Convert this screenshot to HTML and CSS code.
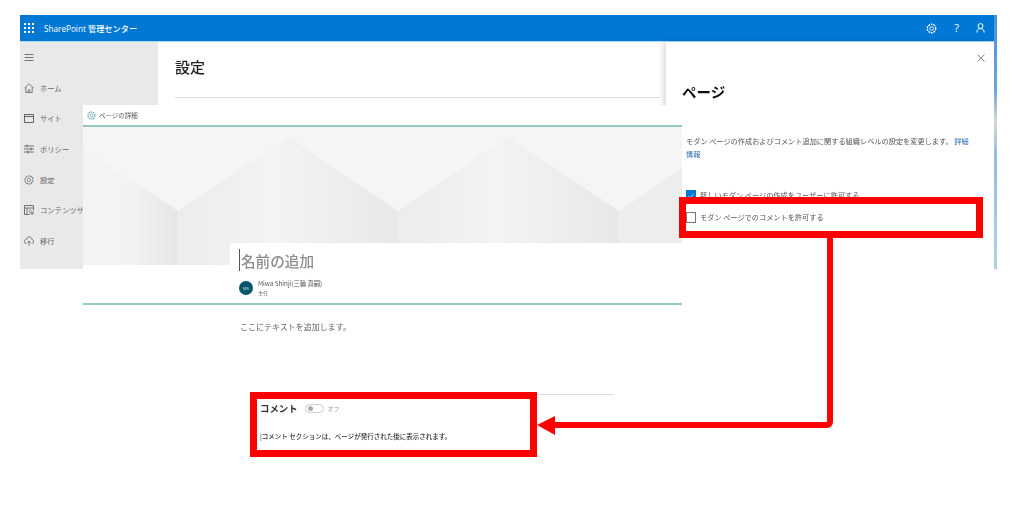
FILE: index.html
```html
<!DOCTYPE html>
<html lang="ja">
<head>
  <meta charset="UTF-8">
  <title>SharePoint 管理センター</title>
  <link rel="stylesheet" href="styles.css">
</head>
<body>
  <div class="stage">

    <!-- admin center screenshot -->
    <div class="admin">
      <div class="topbar">
        <svg class="waffle" width="10" height="10" viewBox="0 0 10 10" fill="#fff">
          <rect x="0" y="0" width="2" height="2"/><rect x="4" y="0" width="2" height="2"/><rect x="8" y="0" width="2" height="2"/>
          <rect x="0" y="4" width="2" height="2"/><rect x="4" y="4" width="2" height="2"/><rect x="8" y="4" width="2" height="2"/>
          <rect x="0" y="8" width="2" height="2"/><rect x="4" y="8" width="2" height="2"/><rect x="8" y="8" width="2" height="2"/>
        </svg>
        <span class="brand">SharePoint 管理センター</span>
        <div class="top-icons">
          <svg width="11" height="11" viewBox="0 0 12 12" fill="none" stroke="#fff" stroke-width="1">
            <circle cx="6" cy="6" r="2"/><circle cx="6" cy="6" r="4.6" stroke-dasharray="2 .9" stroke-width="1.5"/>
          </svg>
          <span class="help">?</span>
          <svg width="9" height="12" viewBox="0 0 11 12" fill="none" stroke="#fff" stroke-width="1.2">
            <circle cx="5.5" cy="3.6" r="3"/><path d="M1 11.5c0-3 2-4.9 4.5-4.9s4.500 1.900 4.500 4.900"/>
          </svg>
        </div>
      </div>
      <div class="admin-body">
        <nav class="sidebar">
          <div class="nav-row">
            <svg class="nav-icon" width="9" height="7" viewBox="0 0 9 7" stroke="#666" stroke-width=".9"><path d="M0 .5h9M0 3.500h9M0 6.500h9"/></svg>
          </div>
          <div class="nav-row">
            <svg class="nav-icon" width="10" height="10" viewBox="0 0 10 10" fill="none" stroke="#666" stroke-width=".8"><path d="M.5 5 5 .8 9.500 5M1.800 4v5.500h6.400V4M4 9.500V7h2v2.500"/></svg>
            <span>ホーム</span>
          </div>
          <div class="nav-row">
            <svg class="nav-icon" width="10" height="9" viewBox="0 0 10 9" fill="none" stroke="#555" stroke-width=".9"><path d="M.5.500h9v8h-9zM.5 2.500h9"/></svg>
            <span>サイト</span>
          </div>
          <div class="nav-row">
            <svg class="nav-icon" width="10" height="10" viewBox="0 0 10 10" fill="none" stroke="#555" stroke-width=".8"><path d="M0 2h10M0 5h10M0 8h10M3 .5v3M7 3.500v3M4 6.500v3"/></svg>
            <span>ポリシー</span>
          </div>
          <div class="nav-row">
            <svg class="nav-icon" width="10" height="10" viewBox="0 0 12 12" fill="none" stroke="#666" stroke-width=".8"><circle cx="6" cy="6" r="2"/><circle cx="6" cy="6" r="4.800" stroke-dasharray="2 .9" stroke-width="1.300"/></svg>
            <span>設定</span>
          </div>
          <div class="nav-row">
            <svg class="nav-icon" width="10" height="10" viewBox="0 0 10 10" fill="none" stroke="#555" stroke-width=".8"><path d="M5.500 9.500H.5V.5h9v5M.5 3h9M3 3v6.500M5 5h2M5 7h1"/><circle cx="8" cy="8" r="1.300"/></svg>
            <span>コンテンツサービス</span>
          </div>
          <div class="nav-row">
            <svg class="nav-icon" width="10" height="10" viewBox="0 0 10 10" fill="none" stroke="#555" stroke-width=".8"><path d="M2.500 7.500C1 7.500.4 6.500.4 5.400c0-1.200 1-2 2-2C2.800 1.800 4 1 5.200 1c1.600 0 2.600 1.100 2.700 2.500 1 .1 1.700 1 1.700 2 0 1.100-.8 2-2 2M5 9.500V5M3.500 6.500 5 5l1.500 1.500"/></svg>
            <span>移行</span>
          </div>
        </nav>
        <main class="settings">
          <h1>設定</h1>
          <div class="settings-rule"></div>
        </main>
        <aside class="panel">
          <svg class="panel-close" width="8" height="8" viewBox="0 0 8 8" stroke="#666" stroke-width=".8"><path d="M.5.500l7 7M7.500.500l-7 7"/></svg>
          <h2>ページ</h2>
          <p class="panel-desc">モダン ページの作成およびコメント追加に関する組織レベルの設定を変更します。 <a class="link">詳細</a><br><a class="link">情報</a></p>
          <div class="check-row">
            <span class="check on">
              <svg width="10" height="10" viewBox="0 0 10 10" fill="none" stroke="#fff" stroke-width="1"><path d="M2 5.200 4 7.200 8 3"/></svg>
            </span>
            <span>新しいモダン ページの作成をユーザーに許可する</span>
          </div>
          <div class="check-row second">
            <span class="check"></span>
            <span>モダン ページでのコメントを許可する</span>
          </div>
        </aside>
      </div>
    </div>
    <div class="sky"></div>

    <!-- page details screenshot, pasted over the admin center -->
    <div class="page-shot">
      <div class="shot-head">
        <svg width="9" height="9" viewBox="0 0 12 12" fill="none" stroke="#5f9c9c" stroke-width="1"><circle cx="6" cy="6" r="2"/><circle cx="6" cy="6" r="4.700" stroke-dasharray="2 .9" stroke-width="1.500"/></svg>
        <span>ページの詳細</span>
      </div>
      <svg class="hero" width="599" height="138" viewBox="83 127 599 138" preserveAspectRatio="none">
        <defs>
          <linearGradient id="wall" x1="0" x2="1" y1="0" y2="0">
            <stop offset="0" stop-color="#f3f3f3"/>
            <stop offset=".55" stop-color="#f2f2f2"/>
            <stop offset="1" stop-color="#e6e6e6"/>
          </linearGradient>
          <linearGradient id="wallb" x1="0" x2="1" y1="0" y2="0">
            <stop offset="0" stop-color="#ececec"/>
            <stop offset=".45" stop-color="#f3f3f3"/>
            <stop offset="1" stop-color="#e8e8e8"/>
          </linearGradient>
        </defs>
        <rect x="83" y="127" width="599" height="138" fill="#f2f3f2"/>
        <rect x="83" y="127" width="95" height="138" fill="url(#wall)"/>
        <rect x="178" y="127" width="220" height="138" fill="url(#wallb)"/>
        <rect x="398" y="127" width="221" height="138" fill="url(#wallb)"/>
        <rect x="619" y="127" width="63" height="138" fill="#ededed"/>
        <path d="M83 127H682V168L619 211 508 137 398 211 288 137 178 211 83 147Z" fill="#f4f5f4"/>
      </svg>
      <div class="title-block">
        <div class="title-line"><span class="caret"></span><span class="page-title">名前の追加</span></div>
        <div class="author">
          <span class="avatar">MS</span>
          <div>
            <div class="author-name">Miwa Shinji(三輪 真嗣)</div>
            <div class="author-role">主任</div>
          </div>
        </div>
      </div>
      <div class="teal-rule"></div>
      <p class="page-text">ここにテキストを追加します。</p>
      <div class="page-rule"></div>
      <div class="comments">
        <div class="comments-head">
          <strong>コメント</strong>
          <span class="toggle"><span class="knob"></span></span>
          <span class="off">オフ</span>
        </div>
        <p class="comments-note">|コメント セクションは、ページが発行された後に表示されます。</p>
      </div>
    </div>

    <!-- red callouts -->
    <div class="callout callout-top"></div>
    <div class="callout callout-bottom"></div>
    <svg class="connector" width="300" height="200" viewBox="537 238 300 200">
      <path d="M830 238V421.500Q830 425 826.500 425H553" fill="none" stroke="#ff0000" stroke-width="6"/>
      <path d="M537 425 555 416V435Z" fill="#ff0000"/>
    </svg>

  </div>
</body>
</html>
```

FILE: styles.css
```css
html, body {
  margin: 0;
  padding: 0;
  background: #ffffff;
}

body {
  font-family: "Noto Sans CJK JP", "Noto Sans", sans-serif;
  color: #444;
}

.stage {
  position: relative;
  width: 1018px;
  height: 532px;
  overflow: hidden;
}

/* admin center */
.admin {
  position: absolute;
  left: 20px;
  top: 15px;
  width: 974px;
  height: 254px;
  display: flex;
  flex-direction: column;
  overflow: hidden;
  filter: blur(0.45px);
}

.sky {
  position: absolute;
  left: 994px;
  top: 15px;
  width: 3px;
  height: 254px;
  background: linear-gradient(#4a90d8, #6aa8de 30%, #d9d9d0 42%, #8fbfe0 55%, #a9d6e4);
}

.topbar {
  height: 26px;
  flex: none;
  background: #0078d4;
  border-bottom: 1px solid #a9dcec;
  display: flex;
  align-items: center;
  color: #fff;
}

.waffle {
  margin-left: 4px;
}

.brand {
  margin-left: 10px;
  font-size: 8.2px;
  font-weight: 500;
  font-family: "Open Sans", "Noto Sans CJK JP", sans-serif;
}

.top-icons {
  margin-left: auto;
  margin-right: 9px;
  display: flex;
  align-items: center;
  gap: 17px;
}

.help {
  font-size: 11px;
  line-height: 12px;
  font-family: "Open Sans", sans-serif;
}

.admin-body {
  flex: 1;
  display: flex;
  min-height: 0;
}

.sidebar {
  width: 138px;
  flex: none;
  background: #e9e9e9;
  font-size: 7.3px;
  color: #666;
}

.nav-row {
  height: 30.6px;
  display: flex;
  align-items: center;
  white-space: nowrap;
}

.nav-icon {
  margin-left: 4px;
  width: 10px;
  margin-right: 6px;
}

.settings {
  flex: 1;
  padding: 14px 6px 0 17px;
}

.settings h1 {
  margin: 0;
  font-size: 15px;
  line-height: 21px;
  font-weight: 500;
  color: #222;
}

.settings-rule {
  margin-top: 20px;
  border-top: 1px solid #dcdcdc;
}

.panel {
  position: relative;
  width: 328px;
  flex: none;
  box-sizing: border-box;
  padding: 39px 20px 0 20px;
  background: #fff;
  box-shadow: -3px 0 6px rgba(0, 0, 0, 0.14);
}

.panel-close {
  position: absolute;
  top: 12px;
  right: 9px;
}

.panel h2 {
  margin: 0 0 0 -4px;
  font-size: 14.500px;
  line-height: 22px;
  font-weight: 700;
  color: #111;
}

.panel-desc {
  margin: 32px 0 0;
  font-size: 7.2px;
  line-height: 13px;
  color: #555;
}

.link {
  color: #2b6cb0;
}

.check-row {
  margin-top: 28px;
  display: flex;
  align-items: center;
  gap: 4px;
  font-size: 7.2px;
  line-height: 12px;
  color: #555;
}

.check-row.second {
  margin-top: 10px;
}

.check {
  width: 10px;
  height: 11px;
  flex: none;
  box-sizing: border-box;
  border: 1px solid #777;
  display: flex;
}

.check.on {
  background: #0078d4;
  border-color: #0078d4;
}

/* page details */
.page-shot {
  position: absolute;
  left: 83px;
  top: 105px;
  width: 599px;
  background: #fff;
  filter: blur(0.45px);
}

.shot-head {
  height: 20px;
  display: flex;
  align-items: center;
  gap: 3px;
  padding-left: 4px;
  font-size: 6.500px;
  color: #555;
  border-bottom: 2px solid #96c8c2;
}

.hero {
  display: block;
}

.title-block {
  position: relative;
  margin: -22px 0 0 147px;
  height: 60px;
  background: #fff;
  padding-left: 9px;
  box-sizing: border-box;
}

.title-line {
  height: 36px;
  padding-bottom: 2px;
  box-sizing: border-box;
  display: flex;
  align-items: center;
}

.caret {
  width: 1px;
  height: 22px;
  background: #555;
  margin-right: 1px;
}

.page-title {
  font-size: 14.6px;
  font-weight: 500;
  color: #8c8c8c;
}

.author {
  display: flex;
  align-items: center;
  gap: 5px;
}

.avatar {
  width: 14px;
  height: 14px;
  border-radius: 50%;
  background: #03566b;
  color: #cfe;
  font-size: 4px;
  display: flex;
  align-items: center;
  justify-content: center;
}

.author-name {
  font-size: 6.3px;
  line-height: 9px;
  color: #555;
}

.author-role {
  font-size: 5px;
  line-height: 9px;
  color: #666;
}

.teal-rule {
  border-top: 2px solid #96c8c2;
}

.page-text {
  margin: 15px 0 0 157px;
  font-size: 8px;
  line-height: 14px;
  color: #666;
}

.page-rule {
  margin: 60px 68px 0 177px;
  border-top: 1px solid #dddddd;
}

.comments {
  margin: 5px 0 0 177px;
  padding-bottom: 10px;
}

.comments-head {
  display: flex;
  align-items: center;
  height: 16px;
}

.comments-head strong {
  font-size: 9.400px;
  color: #333;
}

.toggle {
  margin-left: 7px;
  width: 19px;
  height: 9px;
  box-sizing: border-box;
  border: 1px solid #ccc;
  border-radius: 5px;
  display: flex;
  align-items: center;
  padding-left: 2px;
}

.knob {
  width: 5px;
  height: 5px;
  border-radius: 50%;
  background: #aaa;
}

.off {
  margin-left: 4px;
  font-size: 6px;
  color: #999;
}

.comments-note {
  margin: 14px 0 0;
  font-size: 6.500px;
  line-height: 12px;
  font-weight: 500;
  color: #333;
}

/* callouts */
.callout {
  position: absolute;
  box-sizing: border-box;
  border: 7px solid #ff0000;
}

.callout-top {
  left: 679px;
  top: 197px;
  width: 304px;
  height: 41px;
}

.callout-bottom {
  left: 250px;
  top: 392px;
  width: 287px;
  height: 65px;
}

.connector {
  position: absolute;
  left: 537px;
  top: 238px;
}
```
